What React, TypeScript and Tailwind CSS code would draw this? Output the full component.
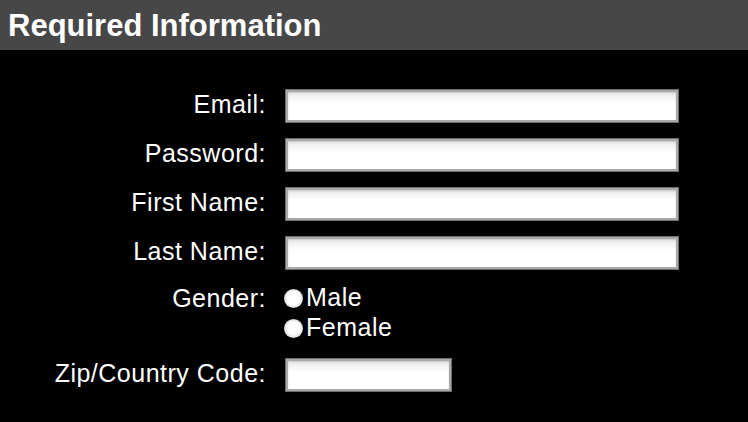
import React from "react";

const Input = ({ w }: { w: string }) => (
  <div
    className={`${w} h-[32px] border-2 border-[#a9a9a9] outline outline-1 outline-[#6d6d6d] bg-[linear-gradient(#e9e9e9,#ffffff_40%)] shadow-[inset_0_1px_2px_rgba(0,0,0,0.15)]`}
  />
);

const Radio = ({ label }: { label: string }) => (
  <div className="flex items-center h-[30px]">
    <span className="w-[19px] h-[19px] rounded-full bg-[radial-gradient(circle,#ffffff_45%,#e4e4e4_65%,#7a7a7a_90%,#000000_100%)] mr-[3px]" />
    <span className="pb-[2px]">{label}</span>
  </div>
);

const Row = ({ label, children }: { label: string; children: React.ReactNode }) => (
  <div className="flex items-center h-[32px]">
    <div className="w-[266px] text-right leading-[28px] pb-[4px]">{label}</div>
    <div className="ml-[20px]">{children}</div>
  </div>
);

export default function App() {
  return (
    <div
      className="w-[748px] h-[422px] bg-black text-white overflow-hidden"
      style={{ fontFamily: '"Liberation Sans", Arial, sans-serif' }}
    >
      <div className="h-[50px] bg-[#474747] flex items-center px-[8px]">
        <h1 className="text-[31px] font-bold leading-none pt-[1px]">Required Information</h1>
      </div>
      <div className="pt-[40px] text-[25px] tracking-[0.5px] leading-[30px] flex flex-col">
        <div className="flex flex-col gap-[17px]">
          <Row label="Email:"><Input w="w-[392px]" /></Row>
          <Row label="Password:"><Input w="w-[392px]" /></Row>
          <Row label="First Name:"><Input w="w-[392px]" /></Row>
          <Row label="Last Name:"><Input w="w-[392px]" /></Row>
        </div>
        <div className="flex items-start mt-[14px]">
          <div className="w-[266px] text-right">Gender:</div>
          <div className="ml-[18px] flex flex-col">
            <Radio label="Male" />
            <Radio label="Female" />
          </div>
        </div>
        <div className="mt-[16px]">
          <Row label="Zip/Country Code:"><Input w="w-[165px]" /></Row>
        </div>
      </div>
    </div>
  );
}
